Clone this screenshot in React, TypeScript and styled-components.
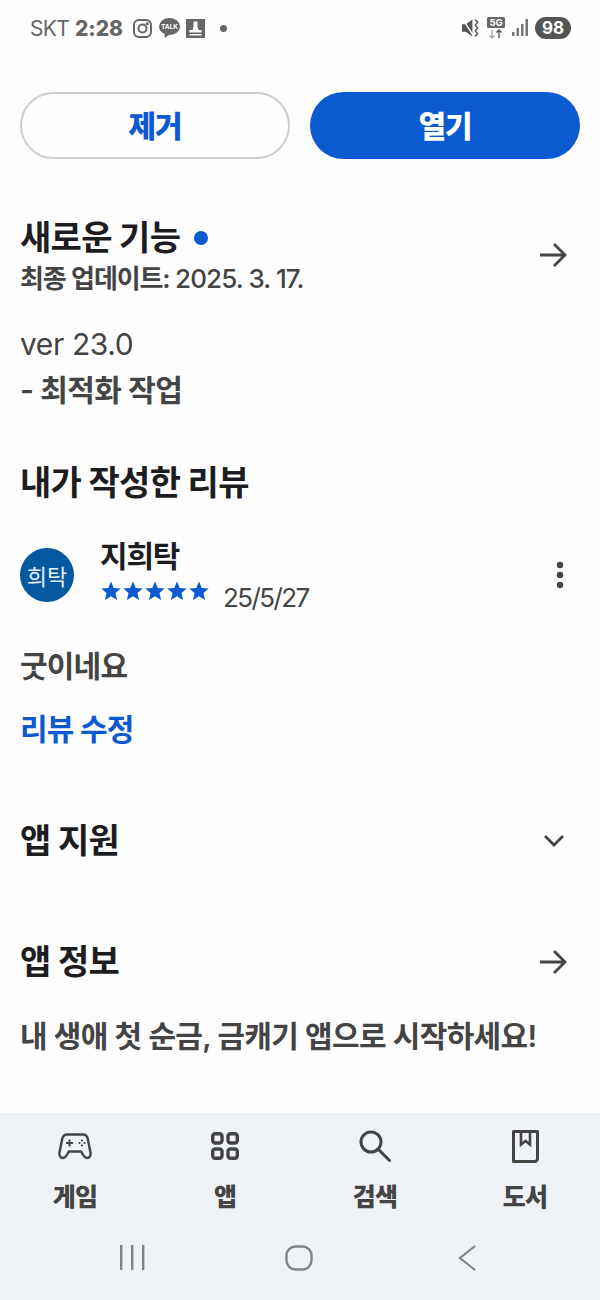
import React from 'react';
import styled, { createGlobalStyle } from 'styled-components';

const GlobalStyle = createGlobalStyle`
  html, body {
    margin: 0;
    padding: 0;
    background: #fdfdfe;
  }
  * {
    box-sizing: border-box;
  }
`;

const fontStack = `Inter, 'Noto Sans CJK KR', sans-serif`;

const Page = styled.div`
  width: 600px;
  height: 1300px;
  display: flex;
  flex-direction: column;
  font-family: ${fontStack};
  color: #1d1d1f;
  background: #fdfdfe;
  overflow: hidden;
`;

const StatusBar = styled.div`
  height: 56px;
  flex: none;
  padding: 0 29px 0 30px;
  display: flex;
  align-items: center;
  justify-content: space-between;
  color: #666;
`;

const StatusGroup = styled.div`
  display: flex;
  align-items: center;
`;

const Carrier = styled.span`
  font-size: 21px;
  letter-spacing: -0.7px;
  font-weight: 400;
`;

const Clock = styled.span`
  margin-left: 6px;
  margin-right: 10px;
  font-size: 21px;
  font-weight: 800;
  letter-spacing: -0.1px;
`;

const StatusDot = styled.span`
  width: 7px;
  height: 7px;
  margin-left: 15px;
  border-radius: 50%;
  background: #666;
`;

const Battery = styled.span`
  width: 36px;
  height: 22px;
  margin-left: 7px;
  border-radius: 11px;
  background: #555;
  color: #fff;
  font-size: 17px;
  font-weight: 700;
  display: flex;
  align-items: center;
  justify-content: center;
`;

const Content = styled.main`
  flex: 1;
  padding: 36px 20px 0;
`;

const ButtonRow = styled.div`
  display: grid;
  grid-template-columns: 1fr 1fr;
  gap: 20px;
`;

const ActionButton = styled.button<{ $primary?: boolean }>`
  height: 67px;
  border-radius: 34px;
  border: ${(props) => (props.$primary ? 'none' : '2px solid #cdcdcd')};
  background: ${(props) => (props.$primary ? '#0b5acf' : '#fefefe')};
  color: ${(props) => (props.$primary ? '#fff' : '#0b5acf')};
  font-family: ${fontStack};
  font-size: 30px;
  font-weight: 800;
  letter-spacing: -1px;
  padding: 0 0 3px;
`;

const HeadRow = styled.div<{ $top: number }>`
  margin-top: ${(props) => props.$top}px;
  display: flex;
  align-items: center;
  justify-content: space-between;
`;

const Heading = styled.h2<{ $top?: number }>`
  margin: ${(props) => props.$top ?? 0}px 0 0;
  font-size: 34px;
  line-height: 46px;
  font-weight: 700;
  letter-spacing: -0.7px;
  display: flex;
  align-items: center;
`;

const BlueDot = styled.span`
  width: 14px;
  height: 14px;
  margin-left: 14px;
  border-radius: 50%;
  background: #0b5acf;
`;

const UpdatedAt = styled.div`
  margin-top: 2px;
  font-size: 26px;
  line-height: 32px;
  font-weight: 600;
  letter-spacing: -1.1px;
  color: #444;
`;

const UpdatedDate = styled.span`
  font-weight: 500;
  letter-spacing: -0.9px;
`;

const BodyText = styled.p<{ $top: number; $weight?: number; $tracking?: number }>`
  margin: ${(props) => props.$top}px 0 0;
  font-size: 30px;
  line-height: 40px;
  font-weight: ${(props) => props.$weight ?? 400};
  letter-spacing: ${(props) => props.$tracking ?? -0.8}px;
  color: #444;
`;

const ReviewRow = styled.div`
  margin-top: 30px;
  display: flex;
  align-items: center;
`;

const Avatar = styled.div`
  width: 54px;
  height: 54px;
  flex: none;
  border-radius: 50%;
  background: #03589f;
  color: #e8f0f8;
  font-size: 22px;
  display: flex;
  align-items: center;
  justify-content: center;
`;

const Reviewer = styled.div`
  flex: 1;
  margin-left: 26px;
`;

const ReviewerName = styled.div`
  font-size: 30px;
  line-height: 40px;
  font-weight: 700;
  letter-spacing: -1.2px;
`;

const RatingRow = styled.div`
  height: 38px;
  display: flex;
  align-items: flex-start;
`;

const Stars = styled.div`
  margin-top: 5px;
  display: flex;
`;

const ReviewDate = styled.span`
  margin: 6px 0 0 13px;
  font-size: 26px;
  line-height: 32px;
  letter-spacing: -1.6px;
  color: #444;
`;

const EditLink = styled.a`
  display: block;
  margin-top: 23px;
  font-size: 30px;
  line-height: 40px;
  font-weight: 700;
  letter-spacing: -0.8px;
  color: #0b5acf;
`;

const BottomArea = styled.div`
  flex: none;
  height: 187px;
  background: #eff2f7;
`;

const TabBar = styled.nav`
  height: 112px;
  padding: 14px 0 0 0;
  display: grid;
  grid-template-columns: 150px 150px 150px 150px;
`;

const Tab = styled.div`
  display: flex;
  flex-direction: column;
  align-items: center;
  color: #444;
`;

const TabIcon = styled.div`
  height: 38px;
  display: flex;
  align-items: center;
  justify-content: center;
`;

const TabLabel = styled.span`
  margin-top: 16px;
  font-size: 25px;
  line-height: 32px;
  font-weight: 800;
  letter-spacing: -0.8px;
`;

const NavBar = styled.div`
  height: 40px;
  margin-top: 13px;
  display: grid;
  grid-template-columns: 150px 184px 154px;
  padding: 0 0 0 57px;
  color: #808489;
  justify-items: center;
  align-items: center;
`;

const Star = () => (
  <svg width="22" height="20" viewBox="0 0 24 22" fill="#0b5acf">
    <path d="M12 0.500l3 7.100 7.700.7-5.800 5 1.800 7.500L12 16.800l-6.700 4 1.800-7.500-5.800-5 7.700-.7z" />
  </svg>
);

const ArrowRight = () => (
  <svg width="30" height="30" viewBox="0 0 30 30" fill="none" stroke="#444" strokeWidth="2.800" style={{ marginRight: 12 }}>
    <path d="M2 15h25M16 4l11 11-11 11" />
  </svg>
);

function App() {
  return (
    <Page>
      <GlobalStyle />
      <StatusBar>
        <StatusGroup>
          <Carrier>SKT</Carrier>
          <Clock>2:28</Clock>
          <svg width="19" height="19" viewBox="0 0 19 19" fill="none" stroke="#666" strokeWidth="2">
            <rect x="1" y="1" width="17" height="17" rx="5" />
            <circle cx="9.500" cy="9.500" r="4" />
            <circle cx="14.300" cy="4.700" r="0.600" fill="#666" />
          </svg>
          <svg width="21" height="20" viewBox="0 0 21 20" style={{ marginLeft: 7 }}>
            <ellipse cx="10.500" cy="8.500" rx="10.500" ry="8.500" fill="#666" />
            <path d="M5 14l1 6 5-4z" fill="#666" />
            <text x="10.500" y="11" textAnchor="middle" fontSize="6.500" fontWeight="700" fill="#fff">TALK</text>
          </svg>
          <svg width="19" height="19" viewBox="0 0 19 19" style={{ marginLeft: 6 }}>
            <rect width="19" height="19" fill="#666" />
            <path d="M7.500 2.500h4v5.500l1 3h3v2.500h-12V11h3l1-3z" fill="#fff" />
            <path d="M3.500 15h12v1.500h-12z" fill="#fff" />
          </svg>
          <StatusDot />
        </StatusGroup>
        <StatusGroup>
          <svg width="17" height="20" viewBox="0 0 18 20" fill="#555">
            <path d="M0 6h4l7-5v18l-7-5H0z" />
            <path d="M1 1l11 17" stroke="#fdfdfe" strokeWidth="1.500" />
            <path d="M14 1l2.500 3-2.500 3 2.500 3-2.500 3 2.500 3-2.500 3" fill="none" stroke="#555" strokeWidth="1.500" />
          </svg>
          <svg width="19" height="22" viewBox="0 0 19 22" style={{ marginLeft: 8 }}>
            <rect width="18" height="11" rx="1.500" fill="#666" />
            <text x="9" y="9" textAnchor="middle" fontSize="9.500" fontWeight="700" fill="#fff">5G</text>
            <path d="M5 13v8M2.500 18.500L5 21l2.500-2.500" fill="none" stroke="#aaa" strokeWidth="1.400" />
            <path d="M12 21v-8M9.500 15.500L12 13l2.500 2.500" fill="none" stroke="#555" strokeWidth="1.400" />
          </svg>
          <svg width="16" height="18" viewBox="0 0 16 18" fill="#777" style={{ marginLeft: 6 }}>
            <rect x="0" y="13" width="2.500" height="4" />
            <rect x="4.500" y="9" width="2.500" height="8" />
            <rect x="9" y="5" width="2.500" height="12" />
            <rect x="13.500" y="0" width="2.500" height="17" />
          </svg>
          <Battery>98</Battery>
        </StatusGroup>
      </StatusBar>

      <Content>
        <ButtonRow>
          <ActionButton>제거</ActionButton>
          <ActionButton $primary>열기</ActionButton>
        </ButtonRow>

        <HeadRow $top={56}>
          <div>
            <Heading>
              새로운 기능
              <BlueDot />
            </Heading>
            <UpdatedAt>
              최종 업데이트: <UpdatedDate>2025. 3. 17.</UpdatedDate>
            </UpdatedAt>
          </div>
          <ArrowRight />
        </HeadRow>

        <BodyText $top={29} $tracking={-0.4}>ver 23.0</BodyText>
        <BodyText $top={6} $weight={600} $tracking={-0.6}>- 최적화 작업</BodyText>

        <Heading $top={50}>내가 작성한 리뷰</Heading>

        <ReviewRow>
          <Avatar>희탁</Avatar>
          <Reviewer>
            <ReviewerName>지희탁</ReviewerName>
            <RatingRow>
              <Stars>
                {[0, 1, 2, 3, 4].map((index) => (
                  <Star key={index} />
                ))}
              </Stars>
              <ReviewDate>25/5/27</ReviewDate>
            </RatingRow>
          </Reviewer>
          <svg width="10" height="28" viewBox="0 0 10 28" fill="#444" style={{ marginRight: 15 }}>
            <circle cx="5" cy="4" r="3.200" />
            <circle cx="5" cy="14" r="3.200" />
            <circle cx="5" cy="24" r="3.200" />
          </svg>
        </ReviewRow>

        <BodyText $top={32} $weight={600}>굿이네요</BodyText>
        <EditLink>리뷰 수정</EditLink>

        <HeadRow $top={69}>
          <Heading>앱 지원</Heading>
          <svg width="22" height="14" viewBox="0 0 22 14" fill="none" stroke="#444" strokeWidth="2.800" style={{ marginRight: 15 }}>
            <path d="M2 2l9 9 9-9" />
          </svg>
        </HeadRow>

        <HeadRow $top={75}>
          <Heading>앱 정보</Heading>
          <ArrowRight />
        </HeadRow>

        <BodyText $top={31} $weight={600} $tracking={-0.67}>내 생애 첫 순금, 금캐기 앱으로 시작하세요!</BodyText>
      </Content>

      <BottomArea>
        <TabBar>
          <Tab>
            <TabIcon>
              <svg width="34" height="27" viewBox="0 0 34 27" fill="none" stroke="#444" strokeWidth="2.400">
                <path d="M9 1.500h16c2.500 0 4 1.500 4.700 4l2.800 14c.6 3-1 5.500-3.300 5.500-1.800 0-2.800-1-4-3l-2-3.500H10.800l-2 3.500c-1.200 2-2.200 3-4 3-2.300 0-3.900-2.500-3.300-5.500l2.800-14c.7-2.500 2.200-4 4.700-4z" strokeLinejoin="round" />
                <path d="M8 10h7M11.500 6.500v7" strokeWidth="2" />
                <circle cx="24" cy="7.500" r="1.100" fill="#444" stroke="none" />
                <circle cx="24" cy="12.500" r="1.100" fill="#444" stroke="none" />
                <circle cx="21.500" cy="10" r="1.100" fill="#444" stroke="none" />
                <circle cx="26.500" cy="10" r="1.100" fill="#444" stroke="none" />
              </svg>
            </TabIcon>
            <TabLabel>게임</TabLabel>
          </Tab>
          <Tab>
            <TabIcon>
              <svg width="28" height="28" viewBox="0 0 28 28" fill="none" stroke="#444" strokeWidth="3.400">
                <rect x="1.700" y="1.700" width="9.300" height="9.300" rx="2.500" />
                <rect x="17" y="1.700" width="9.300" height="9.300" rx="2.500" />
                <rect x="1.700" y="17" width="9.300" height="9.300" rx="2.500" />
                <rect x="17" y="17" width="9.300" height="9.300" rx="2.500" />
              </svg>
            </TabIcon>
            <TabLabel>앱</TabLabel>
          </Tab>
          <Tab>
            <TabIcon>
              <svg width="32" height="32" viewBox="0 0 32 32" fill="none" stroke="#444" strokeWidth="3">
                <circle cx="12" cy="12" r="10" />
                <path d="M19 19l11.500 11.500" strokeLinecap="round" />
              </svg>
            </TabIcon>
            <TabLabel>검색</TabLabel>
          </Tab>
          <Tab>
            <TabIcon>
              <svg width="27" height="33" viewBox="0 0 27 33" fill="none" stroke="#444" strokeWidth="3">
                <path d="M1.500 1.500h24v27a3 3 0 0 1-3 3h-21z" strokeLinejoin="round" />
                <path d="M9 1.500v13l4.500-3.500 4.500 3.500v-13" strokeWidth="2.600" />
              </svg>
            </TabIcon>
            <TabLabel>도서</TabLabel>
          </Tab>
        </TabBar>
        <NavBar>
          <svg width="26" height="26" viewBox="0 0 26 26" fill="#808489">
            <rect x="1" y="0" width="2.400" height="25" />
            <rect x="12" y="0" width="2.400" height="25" />
            <rect x="23" y="0" width="2.400" height="25" />
          </svg>
          <svg width="28" height="26" viewBox="0 0 28 26" fill="none" stroke="#808489" strokeWidth="2.400">
            <rect x="1.500" y="1.500" width="25" height="23" rx="9" />
          </svg>
          <svg width="20" height="26" viewBox="0 0 20 26" fill="none" stroke="#808489" strokeWidth="2.200">
            <path d="M17 1L2 13l15 12" />
          </svg>
        </NavBar>
      </BottomArea>
    </Page>
  );
}

export default App;
